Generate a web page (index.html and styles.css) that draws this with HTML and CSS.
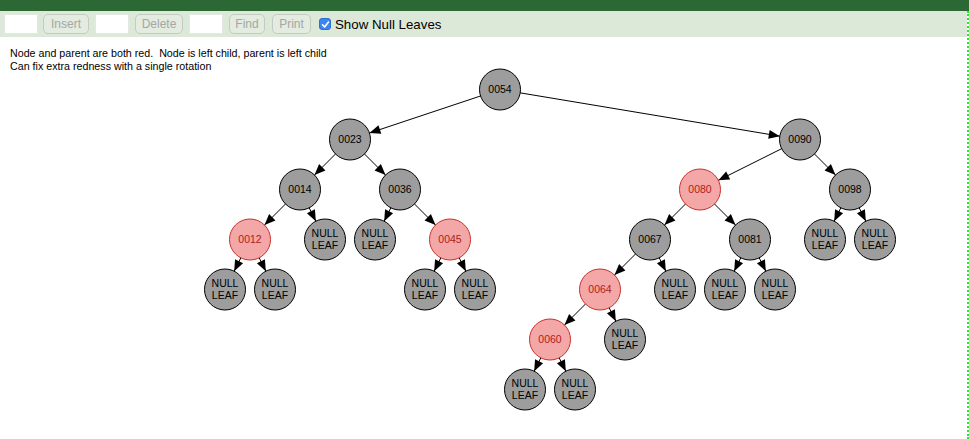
FILE: index.html
```html
<!DOCTYPE html>
<html>
<head>
<meta charset="utf-8">
<link rel="stylesheet" href="styles.css">
</head>
<body>
<div class="topbar"></div>
<div class="frame">
  <div class="toolbar">
    <input class="field" type="text">
    <button class="btn w-insert" disabled>Insert</button>
    <input class="field" type="text">
    <button class="btn w-delete" disabled>Delete</button>
    <input class="field" type="text">
    <button class="btn w-find" disabled>Find</button>
    <button class="btn w-print" disabled>Print</button>
    <label class="toggle"><span class="check"><svg width="9" height="9" viewBox="0 0 9 9"><path d="M1.5 4.8 L3.6 6.9 L7.5 2" fill="none" stroke="#fff" stroke-width="1.6" stroke-linecap="round" stroke-linejoin="round"/></svg></span>Show Null Leaves</label>
  </div>
  <svg class="canvas" width="967" height="402" viewBox="0 37 967 402">
    <defs>
      <marker id="ah" markerUnits="userSpaceOnUse" markerWidth="11" markerHeight="9" refX="31.5" refY="4.5" orient="auto" overflow="visible">
        <path d="M0,0 L11,4.5 L0,9 z" fill="#000"/>
      </marker>
    </defs>
    <g class="msg">
      <text x="10" y="57">Node and parent are both red.  Node is left child, parent is left child</text>
      <text x="10" y="70">Can fix extra redness with a single rotation</text>
    </g>
    <g class="edges" stroke="#000" stroke-width="1" marker-end="url(#ah)">
      <line x1="500" y1="89.5" x2="350" y2="139.5"/>
      <line x1="500" y1="89.5" x2="800" y2="139.5"/>
      <line x1="350" y1="139.5" x2="300" y2="189.5"/>
      <line x1="350" y1="139.5" x2="400" y2="189.5"/>
      <line x1="800" y1="139.5" x2="700" y2="189.5"/>
      <line x1="800" y1="139.5" x2="850" y2="189.5"/>
      <line x1="300" y1="189.5" x2="250" y2="239.5"/>
      <line x1="300" y1="189.5" x2="325" y2="239.5"/>
      <line x1="400" y1="189.5" x2="375" y2="239.5"/>
      <line x1="400" y1="189.5" x2="450" y2="239.5"/>
      <line x1="700" y1="189.5" x2="650" y2="239.5"/>
      <line x1="700" y1="189.5" x2="750" y2="239.5"/>
      <line x1="850" y1="189.5" x2="825" y2="239.5"/>
      <line x1="850" y1="189.5" x2="875" y2="239.5"/>
      <line x1="250" y1="239.5" x2="225" y2="289.5"/>
      <line x1="250" y1="239.5" x2="275" y2="289.5"/>
      <line x1="450" y1="239.5" x2="425" y2="289.5"/>
      <line x1="450" y1="239.5" x2="475" y2="289.5"/>
      <line x1="650" y1="239.5" x2="600" y2="289.5"/>
      <line x1="650" y1="239.5" x2="675" y2="289.5"/>
      <line x1="750" y1="239.5" x2="725" y2="289.5"/>
      <line x1="750" y1="239.5" x2="775" y2="289.5"/>
      <line x1="600" y1="289.5" x2="550" y2="339.5"/>
      <line x1="600" y1="289.5" x2="625" y2="339.5"/>
      <line x1="550" y1="339.5" x2="525" y2="389.5"/>
      <line x1="550" y1="339.5" x2="575" y2="389.5"/>
    </g>
    <g class="nodes">
      <g class="node black"><circle cx="500" cy="89.5" r="20.5"/><text x="500" y="93">0054</text></g>
      <g class="node black"><circle cx="350" cy="139.5" r="20.5"/><text x="350" y="143">0023</text></g>
      <g class="node black"><circle cx="800" cy="139.5" r="20.5"/><text x="800" y="143">0090</text></g>
      <g class="node black"><circle cx="300" cy="189.5" r="20.5"/><text x="300" y="193">0014</text></g>
      <g class="node black"><circle cx="400" cy="189.5" r="20.5"/><text x="400" y="193">0036</text></g>
      <g class="node red"><circle cx="700" cy="189.5" r="20.5"/><text x="700" y="193">0080</text></g>
      <g class="node black"><circle cx="850" cy="189.5" r="20.5"/><text x="850" y="193">0098</text></g>
      <g class="node red"><circle cx="250" cy="239.5" r="20.5"/><text x="250" y="243">0012</text></g>
      <g class="node red"><circle cx="450" cy="239.5" r="20.5"/><text x="450" y="243">0045</text></g>
      <g class="node black"><circle cx="650" cy="239.5" r="20.5"/><text x="650" y="243">0067</text></g>
      <g class="node black"><circle cx="750" cy="239.5" r="20.5"/><text x="750" y="243">0081</text></g>
      <g class="node red"><circle cx="600" cy="289.5" r="20.5"/><text x="600" y="293">0064</text></g>
      <g class="node red"><circle cx="550" cy="339.5" r="20.5"/><text x="550" y="343">0060</text></g>

      <g class="node leaf"><circle cx="325" cy="239.5" r="20.5"/><text x="325" y="237">NULL</text><text x="325" y="249">LEAF</text></g>
      <g class="node leaf"><circle cx="375" cy="239.5" r="20.5"/><text x="375" y="237">NULL</text><text x="375" y="249">LEAF</text></g>
      <g class="node leaf"><circle cx="825" cy="239.5" r="20.5"/><text x="825" y="237">NULL</text><text x="825" y="249">LEAF</text></g>
      <g class="node leaf"><circle cx="875" cy="239.5" r="20.5"/><text x="875" y="237">NULL</text><text x="875" y="249">LEAF</text></g>
      <g class="node leaf"><circle cx="225" cy="289.5" r="20.5"/><text x="225" y="287">NULL</text><text x="225" y="299">LEAF</text></g>
      <g class="node leaf"><circle cx="275" cy="289.5" r="20.5"/><text x="275" y="287">NULL</text><text x="275" y="299">LEAF</text></g>
      <g class="node leaf"><circle cx="425" cy="289.5" r="20.5"/><text x="425" y="287">NULL</text><text x="425" y="299">LEAF</text></g>
      <g class="node leaf"><circle cx="475" cy="289.5" r="20.5"/><text x="475" y="287">NULL</text><text x="475" y="299">LEAF</text></g>
      <g class="node leaf"><circle cx="675" cy="289.5" r="20.5"/><text x="675" y="287">NULL</text><text x="675" y="299">LEAF</text></g>
      <g class="node leaf"><circle cx="725" cy="289.5" r="20.5"/><text x="725" y="287">NULL</text><text x="725" y="299">LEAF</text></g>
      <g class="node leaf"><circle cx="775" cy="289.5" r="20.5"/><text x="775" y="287">NULL</text><text x="775" y="299">LEAF</text></g>
      <g class="node leaf"><circle cx="625" cy="339.5" r="20.5"/><text x="625" y="337">NULL</text><text x="625" y="349">LEAF</text></g>
      <g class="node leaf"><circle cx="525" cy="389.5" r="20.5"/><text x="525" y="387">NULL</text><text x="525" y="399">LEAF</text></g>
      <g class="node leaf"><circle cx="575" cy="389.5" r="20.5"/><text x="575" y="387">NULL</text><text x="575" y="399">LEAF</text></g>
    </g>
  </svg>
</div>
</body>
</html>
```
FILE: styles.css
```css
html, body {
  margin: 0;
  padding: 0;
  background: #fff;
  font-family: "Liberation Sans", Arial, sans-serif;
}
.topbar {
  height: 11px;
  background: #2c6834;
}
.frame {
  width: 967px;
  border-right: 2px dotted #19f019;
  display: flex;
  flex-direction: column;
}
.toolbar {
  height: 26px;
  box-sizing: border-box;
  padding: 3px 0 0 4px;
  background: #dde9d8;
  display: flex;
  align-items: flex-start;
}
.field {
  width: 34px;
  height: 20px;
  box-sizing: border-box;
  margin: 0;
  padding: 0;
  border: 1px solid #e4e8e2;
  background: #fff;
  outline: none;
}
.btn {
  height: 20px;
  box-sizing: border-box;
  margin: 0 0 0 5px;
  padding: 0;
  border: 1px solid #c4cbc2;
  border-radius: 5px;
  background: #e4ebe1;
  color: #a3a8a2;
  font-family: "Liberation Sans", Arial, sans-serif;
  font-size: 12px;
  line-height: 18px;
}
.btn + .field { margin-left: 6px; }
.w-insert { width: 46px; }
.w-delete { width: 48px; margin-left: 6px; }
.w-find { width: 36px; margin-left: 6px; }
.w-print { width: 39px; margin-left: 7px; }
.toggle {
  display: flex;
  align-items: center;
  height: 20px;
  margin-left: 8px;
  font-size: 13.3px;
  color: #000;
}
.check {
  width: 12px;
  height: 12px;
  border-radius: 3px;
  background: #3d86f0;
  border: 1px solid #2f6fd0;
  display: flex;
  align-items: center;
  justify-content: center;
  margin-right: 4px;
  box-sizing: border-box;
}
.check svg { display: block; }
.canvas { display: block; }
.msg text {
  font-family: "Liberation Sans", Arial, sans-serif;
  font-size: 10.7px;
  white-space: pre;
  fill: #000;
}
.node text {
  font-family: "Liberation Sans", Arial, sans-serif;
  font-size: 10.5px;
  text-anchor: middle;
}
.node.black circle, .node.leaf circle {
  fill: #9d9d9d;
  stroke: #000;
  stroke-width: 1;
}
.node.black text, .node.leaf text { fill: #000; }
.node.red circle {
  fill: #f3a7a7;
  stroke: #c8302e;
  stroke-width: 1;
}
.node.red text { fill: #b01c1a; }
```
